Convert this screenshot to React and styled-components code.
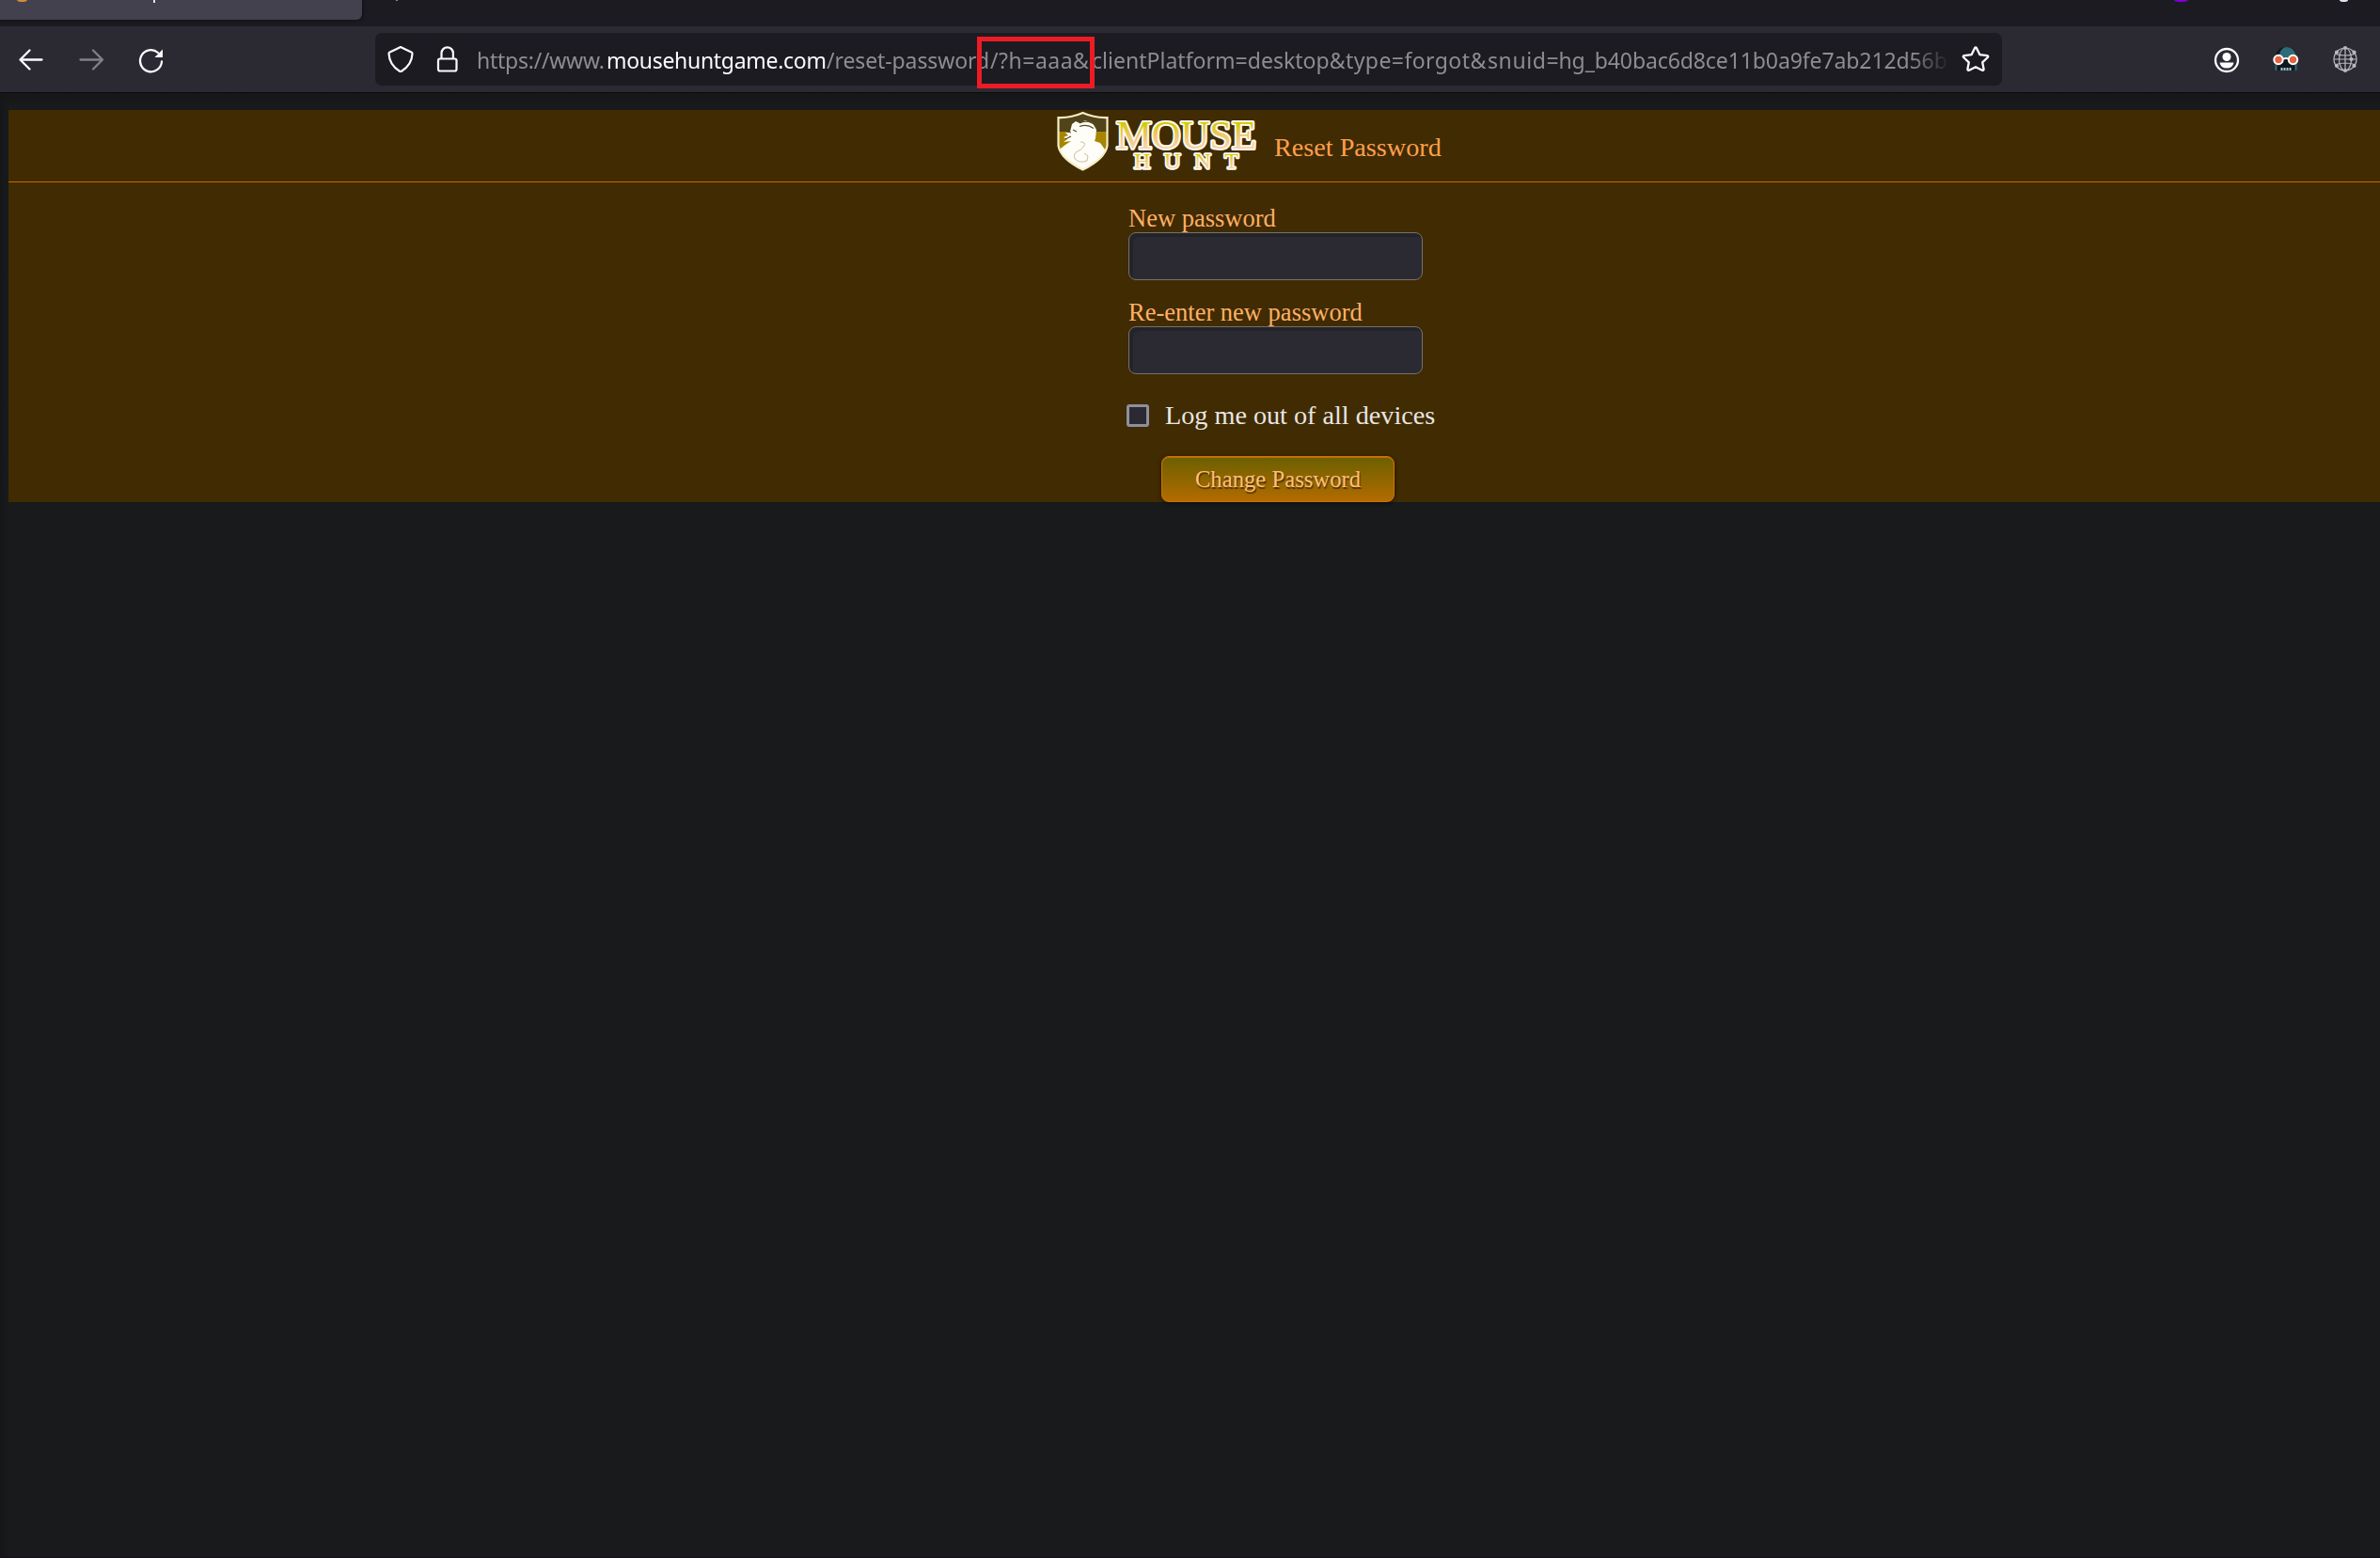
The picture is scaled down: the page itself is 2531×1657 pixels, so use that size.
import React from "react";
import styled, { createGlobalStyle } from "styled-components";

const GlobalStyle = createGlobalStyle`
  *, *::before, *::after { box-sizing: border-box; }
  html, body { margin: 0; padding: 0; background: #181a1b; }
  body { overflow: hidden; }
`;

const Window = styled.div`
  width: 2531px;
  height: 1657px;
  display: flex;
  flex-direction: column;
  overflow: hidden;
  background: #181a1b;
  font-family: "Liberation Serif", "Times New Roman", serif;
`;

const TabStrip = styled.div`
  flex: none;
  height: 28px;
  display: flex;
  justify-content: space-between;
  align-items: flex-start;
  background: #1c1b22;
`;

const StripGroup = styled.div`
  display: flex;
  align-items: flex-start;
  gap: ${(p) => p.$gap}px;
  padding-right: ${(p) => p.$end || 0}px;
`;

const Tab = styled.div`
  width: 385px;
  height: 21px;
  display: flex;
  gap: 134px;
  padding-left: 18px;
  background: #42414d;
  border-radius: 0 0 6px 0;
  box-shadow: 0 0 4px rgba(0, 0, 0, 0.7);
`;

const Sliver = styled.i`
  display: block;
  width: ${(p) => p.$w}px;
  height: ${(p) => p.$h}px;
  background: ${(p) => p.$c};
  border-radius: ${(p) => (p.$round ? "0 0 50% 50% / 0 0 100% 100%" : "0")};
`;

const Toolbar = styled.div`
  flex: none;
  height: 70px;
  display: flex;
  align-items: center;
  padding: 0 22px 0 18px;
  background: #2b2a33;
`;

const NavButtons = styled.div`
  display: flex;
  width: 381px;
  gap: 34px;
`;

const Icon = styled.svg`
  display: block;
  flex: none;
  width: ${(p) => p.$s || 30}px;
  height: ${(p) => p.$s || 30}px;
  overflow: visible;
`;

const UrlBar = styled.div`
  width: 1730px;
  height: 56px;
  display: flex;
  align-items: center;
  justify-content: space-between;
  padding: 0 13px 0 12px;
  background: #1c1b22;
  border-radius: 7px;
`;

const BarIcons = styled.div`
  display: flex;
  gap: 20px;
  width: 96px;
`;

const Url = styled.div`
  display: flex;
  flex: none;
  width: 1567px;
  height: 56px;
  margin-right: auto;
  padding-top: 1px;
  line-height: 56px;
  overflow: hidden;
  white-space: pre;
  font-family: "Noto Sans", "Open Sans", sans-serif;
  font-size: 23px;
  color: #8d8d91;
  mask-image: linear-gradient(to right, #000 1525px, transparent 1567px);
`;

const UrlPart = styled.span`
  flex: none;
  width: ${(p) => p.$w}px;
  letter-spacing: ${(p) => p.$ls}px;
  color: ${(p) => (p.$host ? "#fbfbfe" : "inherit")};
`;

const Highlight = styled.div`
  position: absolute;
  left: 1039px;
  top: 39px;
  width: 125px;
  height: 55px;
  border: 5px solid #ed1c24;
`;

const Extensions = styled.div`
  display: flex;
  gap: 33px;
  margin-left: auto;
`;

const Page = styled.main`
  flex: 1;
  padding: 18px 0 0 9px;
  border-top: 1px solid #0c0c0d;
  border-bottom: 1px solid #17101a;
  background:
    linear-gradient(to bottom, #141617, transparent 14px),
    linear-gradient(to right, #141617, transparent 9px),
    #181a1b;
`;

const Panel = styled.section`
  height: 417px;
  background: #402b02;
`;

const Header = styled.header`
  height: 77px;
  display: flex;
  align-items: flex-start;
  padding-left: 1112px;
  border-bottom: 1px solid #cc6600;
`;

const Logo = styled.svg`
  display: block;
  flex: none;
  width: 220px;
  height: 70px;
`;

const LogoWord = styled.text`
  font-family: "Liberation Serif", serif;
  font-weight: 400;
  font-size: ${(p) => p.$size}px;
  fill: url(#gold);
  stroke: #fffaec;
  stroke-width: ${(p) => p.$stroke}px;
  stroke-linejoin: round;
  paint-order: stroke;
`;

const Title = styled.h1`
  margin: 24px 0 0 14px;
  font-size: 28.2px;
  line-height: 32px;
  font-weight: 400;
  color: #ffa04d;
  white-space: nowrap;
`;

const Form = styled.form`
  display: flex;
  flex-direction: column;
  align-items: flex-start;
  padding: 22px 0 0 1191px;
`;

const Field = styled.label`
  display: flex;
  flex-direction: column;
  margin-bottom: 18px;
  font-size: 26.5px;
  line-height: 33px;
  color: #ffb066;
`;

const Input = styled.input`
  width: 313px;
  height: 51px;
  margin: -2px 0 0;
  border: 1px solid #7a7068;
  border-radius: 8px;
  background: #2b2a33;
  box-shadow: inset 4px 4px 0 #222428;
  outline: none;
`;

const CheckRow = styled.label`
  display: flex;
  align-items: center;
  gap: 17px;
  height: 24px;
  margin: 14px 0 31px -2px;
  font-size: 28.2px;
  line-height: 24px;
  color: #e8e6e3;
  white-space: nowrap;
`;

const Checkbox = styled.input`
  appearance: none;
  width: 24px;
  height: 24px;
  margin: 0;
  border: 3px solid #8f8f9d;
  border-radius: 3px;
  background: #2b2a33;
`;

const Submit = styled.button`
  width: 248px;
  height: 49px;
  margin-left: 35px;
  padding: 1px 0 0;
  border: 1px solid #d17300;
  border-radius: 8px;
  background: linear-gradient(#6b6000, #b36b00);
  box-shadow: inset 0 1px 0 #c46c00, 0 1px 4px rgba(0, 0, 0, 0.6);
  font: 24.7px/30px "Liberation Serif", serif;
  color: #ffc078;
  text-shadow: 1px 2px 1px rgba(50, 30, 0, 0.75);
`;

const stroke = { fill: "none", stroke: "#fbfbfe", strokeWidth: 2, strokeLinecap: "round", strokeLinejoin: "round" };

function MouseHuntLogo() {
  return (
    <Logo viewBox="0 0 220 70" role="img" aria-label="MouseHunt">
      <defs>
        <linearGradient id="gold" x1="0" y1="0" x2="0" y2="1">
          <stop offset="0.25" stopColor="#d3c900" />
          <stop offset="0.5" stopColor="#ecc768" />
          <stop offset="0.75" stopColor="#f5d2a6" />
        </linearGradient>
        <clipPath id="crest">
          <path d="M30.500 3.500Q43 8 56 8V38Q54 52 30.500 64Q7 52 5 38V8Q18 8 30.500 3.500Z" />
        </clipPath>
      </defs>
      <g clipPath="url(#crest)">
        <path d="M0 0h60v25H0z" fill="#51441b" />
        <path d="M0 23h60v45H0z" fill="#a88500" />
        <path d="M19 15l4-3 4 2 6-3 8 3 4 7-1 9-1 3 6 2 8 11v20H2V45l10-8 6-4-8 1 4-3-4-2 5-2-3-3 5-1 1-4z" fill="#fffdf7" />
        <path d="M27 14q9-5 18 3M27 17.500q8-3 15 2M18 24l-5-1M18 28l-6 3M20 21l4 2" fill="none" stroke="#55491d" strokeWidth="1.100" />
        <path d="M28 34q6 0 4 4t-7 6-3 8q5 5 13 2l1-5-4-3" fill="none" stroke="#c4b78f" strokeWidth="0.900" />
      </g>
      <path d="M30.500 3Q43 8.500 56.500 8V38Q54 52 30.500 63.500Q7 52 4.500 38V8Q18 8.500 30.500 3Z" fill="none" stroke="#f6edc5" strokeWidth="2.200" />
      <LogoWord x="66" y="40.500" textLength="149" lengthAdjust="spacingAndGlyphs" $size={43} $stroke={4}>MOUSE</LogoWord>
      <LogoWord x="85" y="61.500" textLength="111" $size={24} $stroke={3.6}>HUNT</LogoWord>
    </Logo>
  );
}

function Skull() {
  return (
    <Icon viewBox="0 0 30 30">
      <path d="M4 27V12Q5 2 15 2t11 10v15z" fill="#10181f" />
      <path d="M8 10Q10 2 16 2q9 1 10 11H9zM3.500 18h2v9h-2zM24.500 18h2v9h-2z" fill="#2d6b79" />
      <path d="M10.500 24v3M13.500 24v3M16.500 24v3M19.500 24v3" stroke="#9cc9d1" strokeWidth="2" />
      <circle cx="7" cy="15.500" r="4.700" fill="#e8613c" stroke="#fff" strokeWidth="2" />
      <circle cx="22.500" cy="15.500" r="4.700" fill="#e8613c" stroke="#fff" strokeWidth="2" />
      <path d="M12 14.500q3-1 6 0" fill="none" stroke="#fff" strokeWidth="2" />
    </Icon>
  );
}

function Globe() {
  const nodes = [[15, 3], [24.500, 7.500], [21.500, 15], [24.500, 22], [15, 27], [6, 22], [6, 7.500]];
  return (
    <Icon viewBox="0 0 30 30">
      <g fill="none" stroke="#b9b9bd" strokeWidth="1.200">
        <circle cx="15" cy="15" r="12" />
        <ellipse cx="15" cy="15" rx="6.500" ry="12" />
        <path d="M15 3v24M3 15h24M5 9.500q10 3 20 0M5 20.500q10-3 20 0" />
      </g>
      {nodes.map(([x, y]) => <circle key={`${x}-${y}`} cx={x} cy={y} r="2.100" fill="#b9b9bd" />)}
    </Icon>
  );
}

export default function App() {
  return (
    <Window>
      <GlobalStyle />
      <TabStrip>
        <StripGroup $gap={36}>
          <Tab>
            <Sliver $w={11} $h={2} $c="#d98a35" $round />
            <Sliver $w={2} $h={3} $c="#d7e6f5" />
          </Tab>
          <Sliver $w={2} $h={1} $c="#8b8b90" />
        </StripGroup>
        <StripGroup $gap={161} $end={34}>
          <Sliver $w={15} $h={2} $c="#8000d7" $round />
          <Sliver $w={9} $h={2} $c="#dfe3ea" $round />
        </StripGroup>
      </TabStrip>
      <Toolbar>
        <NavButtons>
          <Icon viewBox="0 0 30 30"><path {...stroke} strokeWidth="2.300" d="M13.500 5.500L3.500 15.500l10 10M3.500 15.500H26.500" /></Icon>
          <Icon viewBox="0 0 30 30"><path {...stroke} stroke="#818086" strokeWidth="2.300" d="M17 5.500l10 10-10 10M27 15.500H3.500" /></Icon>
          <Icon viewBox="0 0 30 30">
            <path {...stroke} strokeWidth="2.300" d="M22 8A11.500 11.500 0 1 0 26 17.500" />
            <path d="M27 4.500v8.500H18.500z" fill="#fbfbfe" />
          </Icon>
        </NavButtons>
        <UrlBar>
          <BarIcons>
            <Icon viewBox="0 0 30 30"><path {...stroke} strokeWidth="2.200" d="M15 2Q21 5 26.500 7.500q1 0 1 1.500Q27 21 16 27.700q-1 .6-2 0Q3 21 2.500 9q0-1.500 1-1.500Q9 5 15 2Z" /></Icon>
            <Icon viewBox="0 0 30 30">
              <rect {...stroke} strokeWidth="2.200" x="5" y="14.500" width="19.500" height="13" rx="2" />
              <path {...stroke} strokeWidth="2.200" d="M8.500 14V8.500a6.200 6.200 0 0 1 12.400 0V14" />
            </Icon>
          </BarIcons>
          <Url>
            <UrlPart $w={138} $ls={-0.25}>https://www.</UrlPart>
            <UrlPart $w={234} $ls={-0.3} $host>mousehuntgame.com</UrlPart>
            <UrlPart $w={174} $ls={-0.1}>/reset-password</UrlPart>
            <UrlPart $w={108} $ls={0.5}>/?h=aaa&amp;</UrlPart>
            <UrlPart $w={270} $ls={0.02}>clientPlatform=desktop&amp;</UrlPart>
            <UrlPart $w={151} $ls={0.42}>type=forgot&amp;</UrlPart>
            <UrlPart $w={75.5} $ls={0.6}>snuid=</UrlPart>
            <UrlPart $w={430} $ls={-0.1}>hg_b40bac6d8ce11b0a9fe7ab212d56b5</UrlPart>
          </Url>
          <Icon viewBox="0 0 30 30">
            <path {...stroke} strokeWidth="2.300" d="M14 3.200q1-1.700 2 0l3.300 6.900 7.800 1q1.900.4.700 1.900l-5.600 5.300 1.400 7.200q.2 1.800-1.600 1.200L15 23.200l-7 3.500q-1.800.6-1.600-1.200l1.400-7.200L2.200 13q-1.200-1.500.7-1.900l7.800-1z" />
          </Icon>
        </UrlBar>
        <Extensions>
          <Icon viewBox="0 0 30 30">
            <circle {...stroke} cx="15" cy="16" r="12" strokeWidth="2.300" />
            <circle cx="15" cy="12.500" r="4.500" fill="#fbfbfe" />
            <path d="M7.500 18.500h15q-1 6-7.500 6t-7.500-6z" fill="#fbfbfe" />
          </Icon>
          <Skull />
          <Globe />
        </Extensions>
      </Toolbar>
      <Page>
        <Panel>
          <Header>
            <MouseHuntLogo />
            <Title>Reset Password</Title>
          </Header>
          <Form>
            <Field>New password<Input type="password" /></Field>
            <Field>Re-enter new password<Input type="password" /></Field>
            <CheckRow><Checkbox type="checkbox" />Log me out of all devices</CheckRow>
            <Submit type="button">Change Password</Submit>
          </Form>
        </Panel>
      </Page>
      <Highlight />
    </Window>
  );
}
